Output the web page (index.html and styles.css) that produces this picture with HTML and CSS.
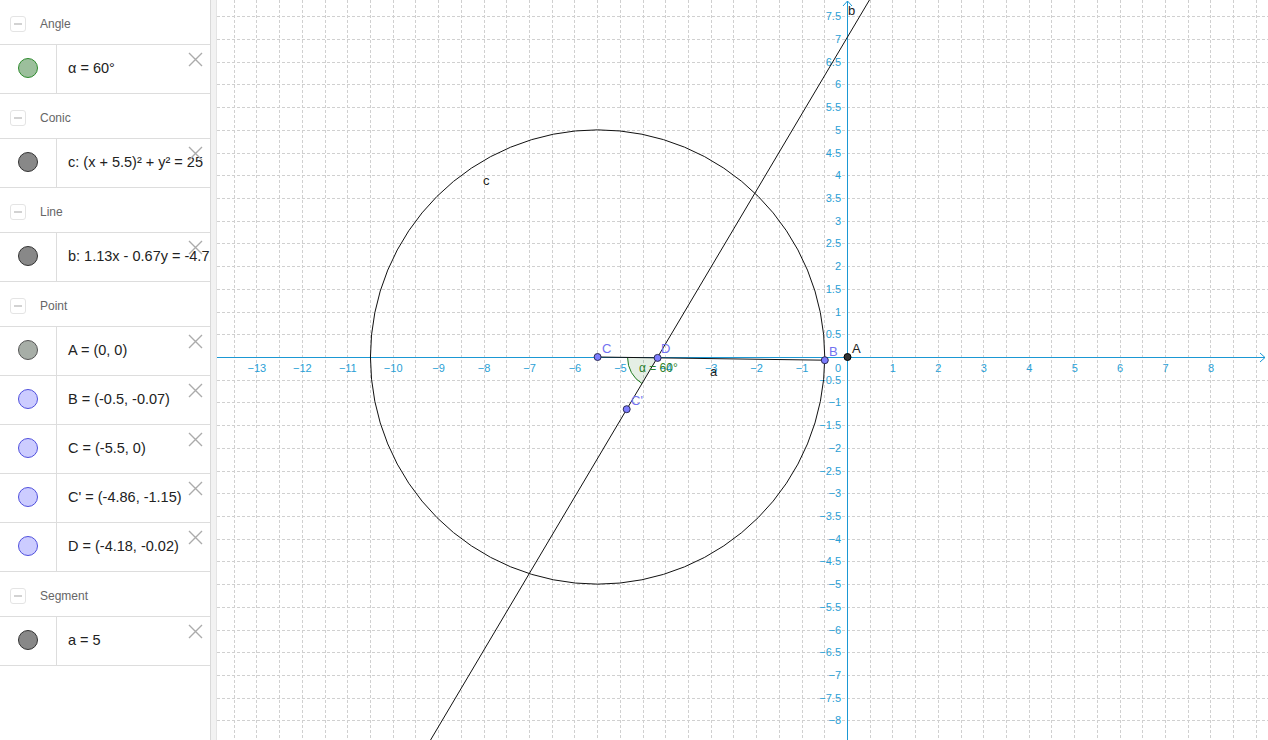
FILE: index.html
```html
<!DOCTYPE html>
<html lang="en">
<head>
<meta charset="utf-8">
<title>Graphing</title>
<link rel="stylesheet" href="styles.css">
</head>
<body>
<div class="app">
  <aside class="algebra">
    <section class="group">
      <div class="group-head"><span class="toggle"></span><span class="group-title">Angle</span></div>
      <div class="item">
        <div class="marble-cell"><span class="marble marble-angle"></span></div>
        <div class="formula">α = 60°</div>
        <svg class="delete" viewBox="0 0 15 15"><path d="M1 1L14 14M14 1L1 14"/></svg>
      </div>
    </section>
    <section class="group">
      <div class="group-head"><span class="toggle"></span><span class="group-title">Conic</span></div>
      <div class="item">
        <div class="marble-cell"><span class="marble marble-gray"></span></div>
        <div class="formula">c: (x + 5.5)² + y² = 25</div>
        <svg class="delete" viewBox="0 0 15 15"><path d="M1 1L14 14M14 1L1 14"/></svg>
      </div>
    </section>
    <section class="group">
      <div class="group-head"><span class="toggle"></span><span class="group-title">Line</span></div>
      <div class="item">
        <div class="marble-cell"><span class="marble marble-gray"></span></div>
        <div class="formula">b: 1.13x - 0.67y = -4.72</div>
        <svg class="delete" viewBox="0 0 15 15"><path d="M1 1L14 14M14 1L1 14"/></svg>
      </div>
    </section>
    <section class="group">
      <div class="group-head"><span class="toggle"></span><span class="group-title">Point</span></div>
      <div class="item">
        <div class="marble-cell"><span class="marble marble-origin"></span></div>
        <div class="formula">A = (0, 0)</div>
        <svg class="delete" viewBox="0 0 15 15"><path d="M1 1L14 14M14 1L1 14"/></svg>
      </div>
      <div class="item">
        <div class="marble-cell"><span class="marble marble-point"></span></div>
        <div class="formula">B = (-0.5, -0.07)</div>
        <svg class="delete" viewBox="0 0 15 15"><path d="M1 1L14 14M14 1L1 14"/></svg>
      </div>
      <div class="item">
        <div class="marble-cell"><span class="marble marble-point"></span></div>
        <div class="formula">C = (-5.5, 0)</div>
        <svg class="delete" viewBox="0 0 15 15"><path d="M1 1L14 14M14 1L1 14"/></svg>
      </div>
      <div class="item">
        <div class="marble-cell"><span class="marble marble-point"></span></div>
        <div class="formula">C' = (-4.86, -1.15)</div>
        <svg class="delete" viewBox="0 0 15 15"><path d="M1 1L14 14M14 1L1 14"/></svg>
      </div>
      <div class="item">
        <div class="marble-cell"><span class="marble marble-point"></span></div>
        <div class="formula">D = (-4.18, -0.02)</div>
        <svg class="delete" viewBox="0 0 15 15"><path d="M1 1L14 14M14 1L1 14"/></svg>
      </div>
    </section>
    <section class="group">
      <div class="group-head"><span class="toggle"></span><span class="group-title">Segment</span></div>
      <div class="item">
        <div class="marble-cell"><span class="marble marble-gray"></span></div>
        <div class="formula">a = 5</div>
        <svg class="delete" viewBox="0 0 15 15"><path d="M1 1L14 14M14 1L1 14"/></svg>
      </div>
    </section>
  </aside>
  <div class="divider"></div>
  <main class="graphics">
    <svg class="canvas" width="1051" height="740" viewBox="0 0 1051 740">
      <path class="grid" d="M17.5 0V740M39.5 0V740M62.5 0V740M85.5 0V740M108.5 0V740M130.5 0V740M153.5 0V740M176.5 0V740M198.5 0V740M221.5 0V740M244.5 0V740M267.5 0V740M289.5 0V740M312.5 0V740M335.5 0V740M357.5 0V740M380.5 0V740M403.5 0V740M426.5 0V740M448.5 0V740M471.5 0V740M494.5 0V740M516.5 0V740M539.5 0V740M562.5 0V740M585.5 0V740M607.5 0V740M653.5 0V740M675.5 0V740M698.5 0V740M721.5 0V740M744.5 0V740M766.5 0V740M789.5 0V740M812.5 0V740M834.5 0V740M857.5 0V740M880.5 0V740M903.5 0V740M925.5 0V740M948.5 0V740M971.5 0V740M993.5 0V740M1016.5 0V740M1039.5 0V740"/>
      <path class="grid" d="M0 16.5H1051M0 39.5H1051M0 62.5H1051M0 84.5H1051M0 107.5H1051M0 130.5H1051M0 153.5H1051M0 175.5H1051M0 198.5H1051M0 221.5H1051M0 243.5H1051M0 266.5H1051M0 289.5H1051M0 312.5H1051M0 334.5H1051M0 380.5H1051M0 402.5H1051M0 425.5H1051M0 448.5H1051M0 471.5H1051M0 493.5H1051M0 516.5H1051M0 539.5H1051M0 561.5H1051M0 584.5H1051M0 607.5H1051M0 630.5H1051M0 652.5H1051M0 675.5H1051M0 698.5H1051M0 720.5H1051"/>

      <path class="axis" d="M0 357.5H1048M630.5 740V1"/>
      <path class="axis" d="M1043 353L1048 357.5L1043 362M626 6L630.5 1L635 6"/>

      <g class="axis-label" text-anchor="middle">
        <text x="39.9" y="372">−13</text>
        <text x="85.3" y="372">−12</text>
        <text x="130.8" y="372">−11</text>
        <text x="176.2" y="372">−10</text>
        <text x="221.6" y="372">−9</text>
        <text x="267.1" y="372">−8</text>
        <text x="312.5" y="372">−7</text>
        <text x="357.9" y="372">−6</text>
        <text x="403.4" y="372">−5</text>
        <text x="448.8" y="372">−4</text>
        <text x="494.2" y="372">−3</text>
        <text x="539.6" y="372">−2</text>
        <text x="585.1" y="372">−1</text>
        <text x="675.9" y="372">1</text>
        <text x="721.4" y="372">2</text>
        <text x="766.8" y="372">3</text>
        <text x="812.2" y="372">4</text>
        <text x="857.7" y="372">5</text>
        <text x="903.1" y="372">6</text>
        <text x="948.5" y="372">7</text>
        <text x="994" y="372">8</text>
      </g>
      <g class="axis-label" text-anchor="end">
        <text x="624" y="20.3">7.5</text>
        <text x="624" y="43">7</text>
        <text x="624" y="65.7">6.5</text>
        <text x="624" y="88.4">6</text>
        <text x="624" y="111.1">5.5</text>
        <text x="624" y="133.9">5</text>
        <text x="624" y="156.6">4.5</text>
        <text x="624" y="179.3">4</text>
        <text x="624" y="202">3.5</text>
        <text x="624" y="224.7">3</text>
        <text x="624" y="247.4">2.5</text>
        <text x="624" y="270.1">2</text>
        <text x="624" y="292.9">1.5</text>
        <text x="624" y="315.6">1</text>
        <text x="624" y="338.3">0.5</text>
        <text x="624" y="372">0</text>
        <text x="624" y="383.7">−0.5</text>
        <text x="624" y="406.4">−1</text>
        <text x="624" y="429.1">−1.5</text>
        <text x="624" y="451.9">−2</text>
        <text x="624" y="474.6">−2.5</text>
        <text x="624" y="497.3">−3</text>
        <text x="624" y="520">−3.5</text>
        <text x="624" y="542.7">−4</text>
        <text x="624" y="565.4">−4.5</text>
        <text x="624" y="588.2">−5</text>
        <text x="624" y="610.9">−5.5</text>
        <text x="624" y="633.6">−6</text>
        <text x="624" y="656.3">−6.5</text>
        <text x="624" y="679">−7</text>
        <text x="624" y="701.7">−7.5</text>
        <text x="624" y="724.4">−8</text>
      </g>

      <path class="sector" d="M440.6 357.9L410.6 357.9A30 30 0 0 0 425.1 383.6Z"/>
      <path class="sector-arc" d="M410.6 357.9A30 30 0 0 0 425.1 383.6"/>

      <circle class="curve" cx="380.6" cy="357" r="227.15"/>
      <path class="curve" d="M656.0 -6L210 746"/>
      <path class="curve" d="M380.6 357L607.8 360.2"/>

      <text class="angle-label" x="422" y="372">α = 60°</text>

      <circle class="pt" cx="380.6" cy="357" r="3.5"/>
      <circle class="pt" cx="440.6" cy="357.9" r="3.5"/>
      <circle class="pt" cx="607.8" cy="360.2" r="3.5"/>
      <circle class="pt" cx="409.7" cy="409.2" r="3.5"/>
      <circle class="pt-origin" cx="630.5" cy="357" r="3.5"/>

      <g class="pt-label">
        <text x="385" y="352.5">C</text>
        <text x="444" y="353">D</text>
        <text x="612" y="356">B</text>
        <text x="414" y="405">C'</text>
      </g>
      <g class="obj-label">
        <text x="635" y="353">A</text>
        <text x="266" y="185">c</text>
        <text x="631" y="15">b</text>
        <text x="493" y="376">a</text>
      </g>
    </svg>
  </main>
</div>
</body>
</html>
```

FILE: styles.css
```css
* {
  box-sizing: border-box;
}

html,
body {
  margin: 0;
  height: 100%;
}

body {
  font-family: "Liberation Sans", Arial, sans-serif;
  background: #ffffff;
  overflow: hidden;
}

.app {
  display: flex;
  height: 740px;
}

/* Algebra panel */
.algebra {
  width: 210px;
  flex: none;
  overflow: hidden;
  background: #ffffff;
}

.group-head {
  height: 45px;
  padding: 4px 0 0 10px;
  border-bottom: 1px solid #dddddd;
  display: flex;
  align-items: center;
}

.toggle {
  width: 16px;
  height: 16px;
  border: 1px solid #e4e4e4;
  border-radius: 3px;
  display: flex;
  align-items: center;
  justify-content: center;
}

.toggle::before {
  content: "";
  width: 8px;
  height: 2px;
  background: #d2d2d2;
}

.group-title {
  margin-left: 14px;
  font-size: 12px;
  color: #666666;
}

.item {
  position: relative;
  height: 49px;
  border-bottom: 1px solid #dddddd;
  display: flex;
}

.marble-cell {
  width: 57px;
  flex: none;
  border-right: 1px solid #dddddd;
  display: flex;
  align-items: center;
  justify-content: center;
  padding-bottom: 3px;
}

.marble {
  width: 20px;
  height: 20px;
  border-radius: 50%;
}

.marble-angle {
  background: #9cbf9c;
  border: 1px solid #2e8b2e;
}

.marble-gray {
  background: #888888;
  border: 1px solid #333333;
}

.marble-origin {
  background: #a7aea7;
  border: 1px solid #555555;
}

.marble-point {
  background: #ccccff;
  border: 1px solid #5050dd;
}

.formula {
  padding: 0 0 3px 11px;
  display: flex;
  align-items: center;
  font-size: 14.5px;
  color: #222222;
  white-space: nowrap;
}

.delete {
  position: absolute;
  top: 7px;
  right: 7px;
  width: 15px;
  height: 15px;
}

.delete path {
  stroke: #ababab;
  stroke-width: 1.4;
  fill: none;
}

/* Splitter */
.divider {
  width: 7px;
  flex: none;
  background: #f2f2f2;
  border-left: 1px solid #d9d9d9;
  border-right: 1px solid #e4e4e4;
}

/* Graphics view */
.graphics {
  flex: 1;
  overflow: hidden;
}

.canvas {
  display: block;
}

.grid {
  stroke: #d0d0d0;
  stroke-width: 1;
  stroke-dasharray: 3 2;
  fill: none;
}

.axis {
  stroke: #1b98d4;
  stroke-width: 1;
  fill: none;
}

.axis-label {
  font-family: "Liberation Sans", Arial, sans-serif;
  font-size: 11px;
  fill: #2a9fd6;
}

.curve {
  stroke: #111111;
  stroke-width: 1;
  fill: none;
}

.sector {
  fill: #006400;
  fill-opacity: 0.1;
  stroke: none;
}

.sector-arc {
  stroke: #1e7a1e;
  stroke-width: 1;
  fill: none;
}

.angle-label {
  font-family: "Liberation Sans", Arial, sans-serif;
  font-size: 12px;
  fill: #2a7f2a;
}

.pt {
  fill: #7d7dff;
  stroke: #2a2a55;
  stroke-width: 1;
}

.pt-origin {
  fill: #333333;
  stroke: #000000;
  stroke-width: 1;
}

.pt-label {
  font-family: "Liberation Sans", Arial, sans-serif;
  font-size: 13px;
  fill: #7272f0;
}

.obj-label {
  font-family: "Liberation Sans", Arial, sans-serif;
  font-size: 13px;
  fill: #222222;
}
```
